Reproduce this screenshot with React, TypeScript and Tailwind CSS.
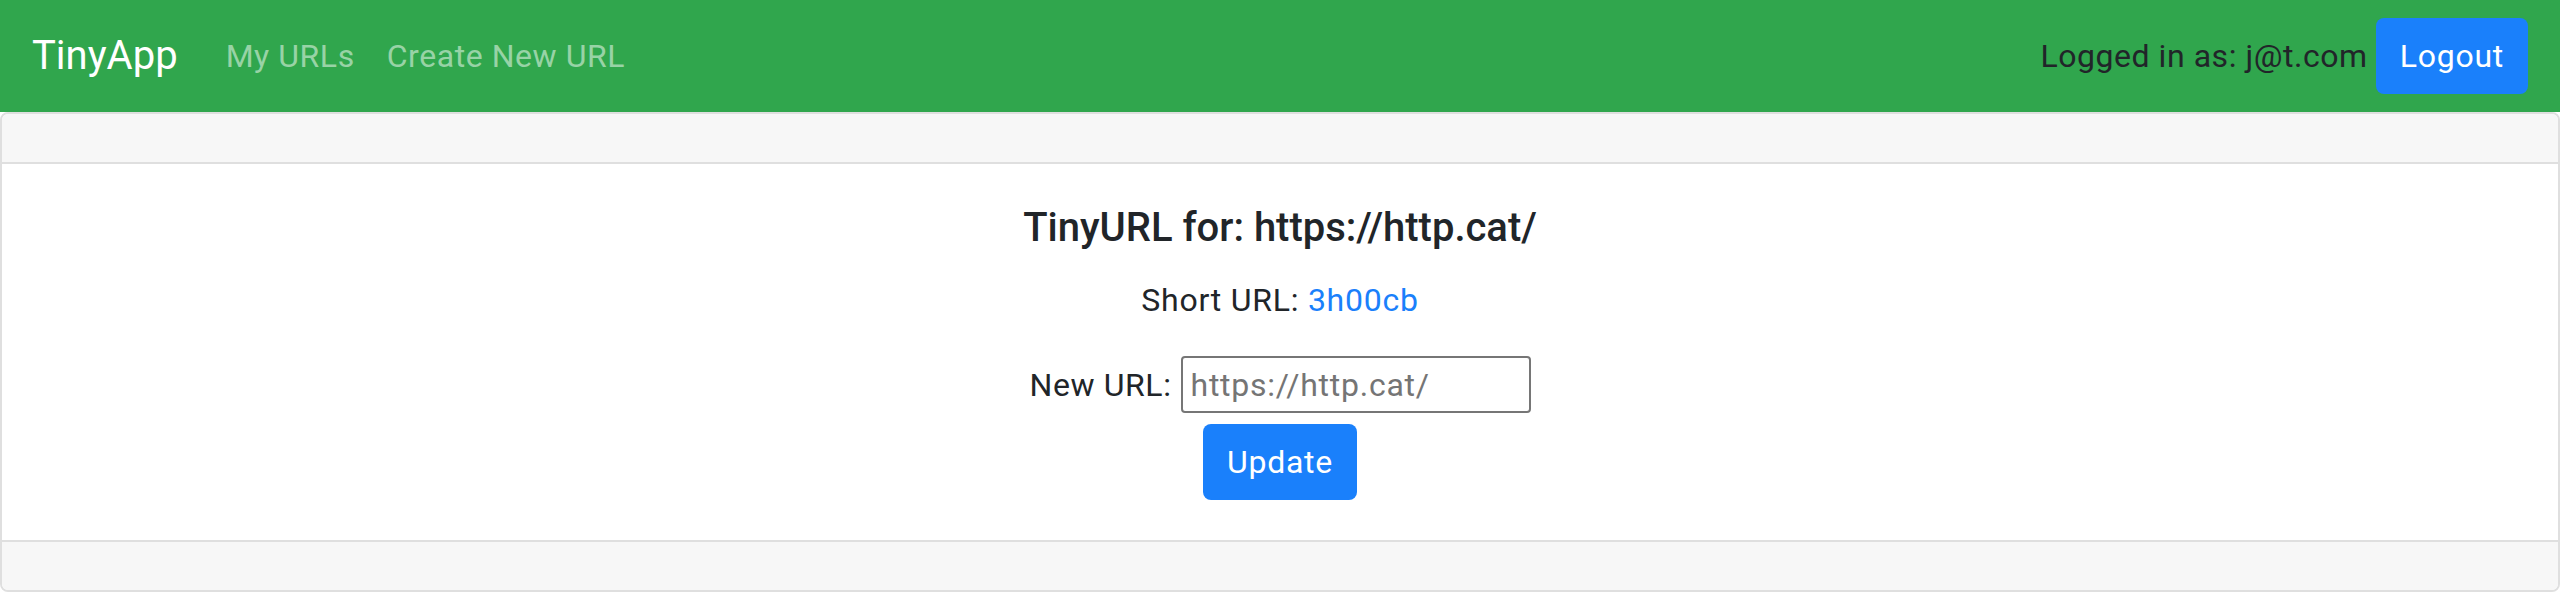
import React from "react";

export default function App() {
  return (
    <div className="min-h-[594px] bg-white text-[#212529] font-['Roboto',sans-serif]">
      <nav className="h-[112px] bg-[#30a64d] px-[32px] flex items-center">
        <a className="text-[40px] leading-[60px] text-white mr-[32px]">TinyApp</a>
        <ul className="flex items-center">
          <li>
            <a className="px-[16px] text-[32px] leading-[48px] tracking-[0.55px] text-[#98d3a6]">My URLs</a>
          </li>
          <li>
            <a className="px-[16px] text-[32px] leading-[48px] tracking-[0.55px] text-[#98d3a6]">Create New URL</a>
          </li>
        </ul>
        <div className="ml-auto flex items-center gap-[8px]">
          <span className="text-[32px] leading-[48px] tracking-[0.55px]">Logged in as: j@t.com</span>
          <button className="h-[76px] px-[24px] rounded-[8px] bg-[#1a80fb] text-white text-[32px] leading-[48px] tracking-[0.75px]">
            Logout
          </button>
        </div>
      </nav>

      <div className="border-[2px] border-[#dfdfdf] rounded-[8px] flex flex-col">
        <div className="h-[50px] bg-[#f7f7f7] border-b-[2px] border-[#dfdfdf] rounded-t-[6px]" />
        <div className="p-[40px] flex flex-col items-center">
          <h5 className="text-[40px] leading-[48px] font-medium mb-[24px]">TinyURL for: https://http.cat/</h5>
          <p className="text-[32px] leading-[48px] tracking-[0.75px] mb-[32px]">
            Short URL: <a className="text-[#1a80fb]">3h00cb</a>
          </p>
          <form className="flex flex-col items-center">
            <div className="flex items-center gap-[9px]">
              <label className="text-[32px] leading-[48px] tracking-[0.6px]">New URL:</label>
              <input
                className="w-[350px] h-[57px] border-[2px] border-[#767676] rounded-[4px] px-[8px] text-[32px] tracking-[0.75px] placeholder:text-[#757575] outline-none"
                placeholder="https://http.cat/"
              />
            </div>
            <button
              type="button"
              className="mt-[11px] h-[76px] px-[24px] rounded-[8px] bg-[#1a80fb] text-white text-[32px] leading-[48px] tracking-[0.75px]"
            >
              Update
            </button>
          </form>
        </div>
        <div className="h-[50px] bg-[#f7f7f7] border-t-[2px] border-[#dfdfdf] rounded-b-[6px]" />
      </div>
    </div>
  );
}
